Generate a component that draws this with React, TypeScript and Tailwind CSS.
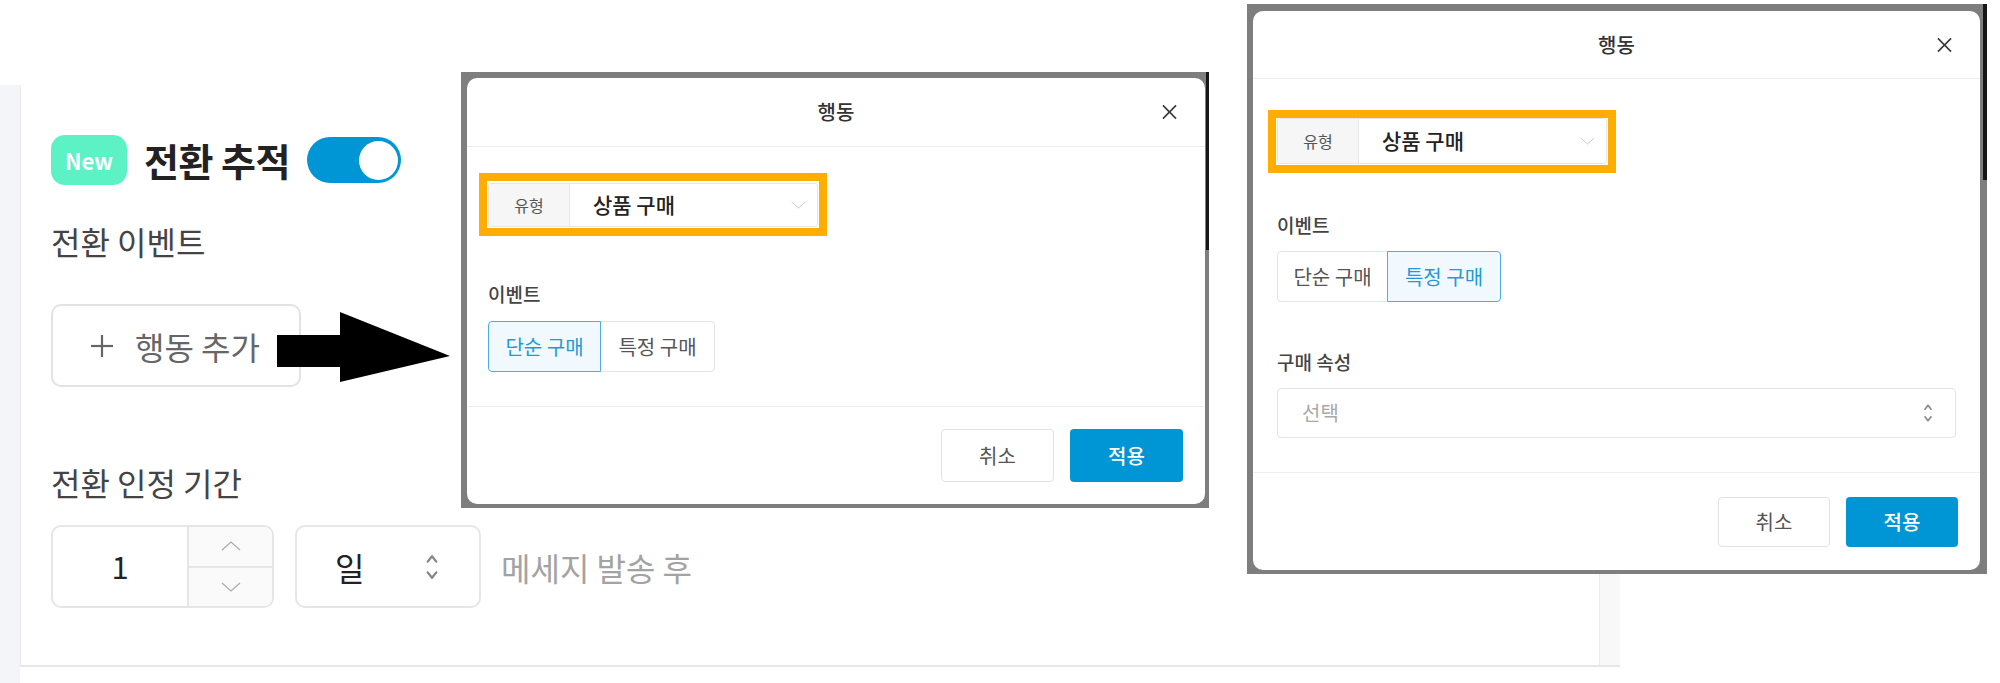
import type { ReactNode } from "react";

const FONT = "font-['Noto_Sans_CJK_KR','Noto_Sans',sans-serif]";

function Chevron({ dir, className }: { dir: "up" | "down"; className?: string }) {
  return (
    <svg viewBox="0 0 20 10" className={className} fill="none" stroke="currentColor" strokeWidth="1.2">
      {dir === "up" ? <polyline points="1,9 10,1 19,9" /> : <polyline points="1,1 10,9 19,1" />}
    </svg>
  );
}

function UpDown({ className }: { className?: string }) {
  return (
    <svg viewBox="0 0 12 26" className={className} fill="none" stroke="currentColor" strokeWidth="2.2" strokeLinecap="round" strokeLinejoin="round">
      <polyline points="2,8 6,3 10,8" />
      <polyline points="2,18 6,23 10,18" />
    </svg>
  );
}

function CloseIcon() {
  return (
    <svg viewBox="0 0 16 16" className="size-[15px] text-[#3a3a3a]" fill="none" stroke="currentColor" strokeWidth="1.7">
      <line x1="1" y1="1" x2="15" y2="15" />
      <line x1="15" y1="1" x2="1" y2="15" />
    </svg>
  );
}

/** Orange annotation box drawn over the select, as in the source capture. */
function Highlight({ children, top }: { children: ReactNode; top: number }) {
  return (
    <div className="relative w-[330px]">
      {children}
      <div
        className="pointer-events-none absolute -left-[9px] -right-[9px] -bottom-[9px] border-[8px] border-[#ffad00]"
        style={{ top: -top }}
      />
    </div>
  );
}

function TypeSelect({ h }: { h: string }) {
  return (
    <div className={`flex w-[330px] overflow-hidden rounded-[3px] border border-[#e6e6e6] ${h}`}>
      <div className="flex w-[81px] items-center justify-center border-r border-[#e6e6e6] bg-[#f6f6f6] text-[16px] text-[#555]">
        유형
      </div>
      <div className="flex flex-1 items-center pl-[23px] pr-[11px]">
        <span className="text-[21px] font-medium text-[#222]">상품 구매</span>
        <Chevron dir="down" className="ml-auto h-[8px] w-[15px] text-[#c4c4c4]" />
      </div>
    </div>
  );
}

function Segments({ active, widths }: { active: 0 | 1; widths: [string, string] }) {
  const labels = ["단순 구매", "특정 구매"];
  return (
    <div className="flex h-[51px]">
      {labels.map((label, i) => (
        <div
          key={label}
          className={[
            "flex items-center justify-center border text-[20px]",
            widths[i],
            i === 0 ? "rounded-l-[4px]" : "-ml-px rounded-r-[4px]",
            i === active
              ? "relative z-10 border-[#4aaee3] bg-[#f1f9fe] text-[#1e9bd7]"
              : "border-[#e4e4e4] bg-white text-[#555]",
          ].join(" ")}
        >
          {label}
        </div>
      ))}
    </div>
  );
}

function Footer({ btnH, btnW }: { btnH: string; btnW: string }) {
  return (
    <div className="flex flex-1 items-center justify-end gap-[16px] border-t border-[#efefef] pr-[22px]">
      <button type="button" className={`rounded-[4px] border border-[#e2e2e2] bg-white text-[20px] text-[#555] ${btnH} ${btnW}`}>
        취소
      </button>
      <button type="button" className={`rounded-[4px] bg-[#0096d6] text-[20px] font-medium text-white ${btnH} ${btnW}`}>
        적용
      </button>
    </div>
  );
}

function DialogHeader({ h }: { h: string }) {
  return (
    <div className={`relative flex shrink-0 items-center justify-center border-b border-[#efefef] ${h}`}>
      <span className="text-[20px] font-medium text-[#333]">행동</span>
      <span className="absolute right-[28px] top-1/2 flex -translate-y-1/2">
        <CloseIcon />
      </span>
    </div>
  );
}

function SimpleDialog() {
  return (
    <div className="absolute left-[461px] top-[72px] h-[436px] w-[748px] bg-[#7e7e7e] pb-[4px] pl-[6px] pr-[4px] pt-[6px]">
      <div className="absolute right-0 top-0 h-[178px] w-[3px] bg-[#161616]" />
      <div className="flex h-full flex-col rounded-[10px] bg-white">
        <DialogHeader h="h-[69px]" />
        <div className="flex flex-col px-[21px] pb-[34px] pt-[36px]">
          <Highlight top={10}>
            <TypeSelect h="h-[44px]" />
          </Highlight>
          <div className="mt-[55px] text-[19px] font-medium leading-[24px] text-[#444]">이벤트</div>
          <div className="mt-[15px]">
            <Segments active={0} widths={["w-[113px]", "w-[115px]"]} />
          </div>
        </div>
        <Footer btnH="h-[53px]" btnW="w-[113px]" />
      </div>
    </div>
  );
}

function SpecificDialog() {
  return (
    <div className="absolute left-[1247px] top-[4px] h-[570px] w-[740px] bg-[#7e7e7e] pb-[4px] pl-[6px] pr-[7px] pt-[7px]">
      <div className="absolute right-0 top-0 h-[176px] w-[4px] bg-[#161616]" />
      <div className="flex h-full flex-col rounded-[10px] bg-white">
        <DialogHeader h="h-[68px]" />
        <div className="flex flex-col px-[24px] pb-[34px] pt-[39px]">
          <Highlight top={8}>
            <TypeSelect h="h-[46px]" />
          </Highlight>
          <div className="mt-[49px] text-[19px] font-medium leading-[24px] text-[#444]">이벤트</div>
          <div className="mt-[14px]">
            <Segments active={1} widths={["w-[111px]", "w-[114px]"]} />
          </div>
          <div className="mt-[48px] text-[19px] font-medium leading-[24px] text-[#444]">구매 속성</div>
          <div className="mt-[14px] flex h-[50px] items-center rounded-[4px] border border-[#e4e4e4] pl-[24px] pr-[22px]">
            <span className="text-[20px] text-[#a9a9a9]">선택</span>
            <UpDown className="ml-auto h-[20px] w-[10px] text-[#8a8a8a]" />
          </div>
        </div>
        <Footer btnH="h-[50px]" btnW="w-[112px]" />
      </div>
    </div>
  );
}

function Arrow() {
  return (
    <svg className="absolute left-[277px] top-[312px] h-[70px] w-[173px]" viewBox="0 0 173 70">
      <polygon points="0,23 63,23 63,0 173,44 63,70 63,55 0,55" fill="#000" />
    </svg>
  );
}

export default function App() {
  return (
    <div className={`relative h-[683px] w-[2000px] overflow-hidden bg-white ${FONT}`}>
      <div className="flex h-full pt-[85px]">
        <div className="w-[20px] shrink-0 bg-[#f4f5f9]" />
        <div className="flex w-[1600px] flex-col">
          <div className="flex border-b-2 border-[#e7e7e7]">
            <div className="flex w-[1580px] flex-col border-l border-r border-[#ececec] pb-[57px] pl-[30px] pt-[50px]">
              <div className="flex h-[50px] items-center">
                <span className="flex h-[50px] w-[76px] items-center justify-center rounded-[14px] bg-[#5cf2c6] text-[22px] font-bold text-white">
                  New
                </span>
                <h1 className="ml-[17px] w-[146px] whitespace-nowrap text-[38px] font-bold leading-none tracking-[-0.5px] text-[#222]">
                  전환 추적
                </h1>
                <div className="ml-[17px] flex h-[46px] w-[94px] items-center justify-end rounded-full bg-[#0096d6] pr-[3px]">
                  <div className="size-[39px] rounded-full bg-white" />
                </div>
              </div>

              <div className="mt-[34px] text-[32px] leading-[45px] text-[#444]">전환 이벤트</div>

              <button
                type="button"
                className="mt-[40px] flex h-[83px] w-[250px] items-center rounded-[10px] border-2 border-[#e2e2e2] bg-white pl-[37px] text-[32px] text-[#666]"
              >
                <svg viewBox="0 0 24 24" className="size-[24px]" fill="none" stroke="currentColor" strokeWidth="2.2">
                  <line x1="12" y1="1" x2="12" y2="23" />
                  <line x1="1" y1="12" x2="23" y2="12" />
                </svg>
                <span className="ml-[21px]">행동 추가</span>
              </button>

              <div className="mt-[73px] text-[32px] leading-[45px] text-[#444]">전환 인정 기간</div>

              <div className="mt-[20px] flex h-[83px] items-center">
                <div className="flex h-[83px] w-[223px] overflow-hidden rounded-[10px] border-2 border-[#e6e6e6]">
                  <div className="flex flex-1 items-center justify-center text-[31px] text-[#222]">1</div>
                  <div className="flex w-[85px] flex-col border-l-2 border-[#e6e6e6] bg-[#fafafa]">
                    <div className="flex flex-1 items-center justify-center border-b-2 border-[#e6e6e6]">
                      <Chevron dir="up" className="h-[10px] w-[22px] text-[#aaa]" />
                    </div>
                    <div className="flex flex-1 items-center justify-center">
                      <Chevron dir="down" className="h-[10px] w-[22px] text-[#aaa]" />
                    </div>
                  </div>
                </div>
                <div className="ml-[21px] flex h-[83px] w-[186px] items-center rounded-[10px] border-2 border-[#e6e6e6] pl-[38px] pr-[40px]">
                  <span className="text-[32px] text-[#222]">일</span>
                  <UpDown className="ml-auto h-[28px] w-[14px] text-[#888]" />
                </div>
                <span className="ml-[20px] text-[32px] text-[#a3a3a3]">메세지 발송 후</span>
              </div>
            </div>
            <div className="w-[20px] bg-[#f8f8f8]" />
          </div>
        </div>
      </div>

      <Arrow />
      <SimpleDialog />
      <SpecificDialog />
    </div>
  );
}
